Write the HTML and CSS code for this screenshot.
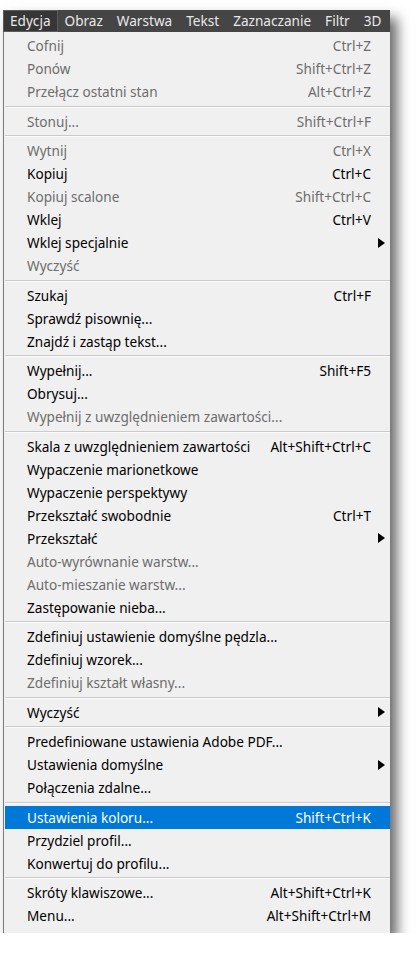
FILE: index.html
```html
<!DOCTYPE html>
<html lang="pl">
<head>
<meta charset="utf-8">
<title>Edycja</title>
<link rel="stylesheet" href="styles.css">
</head>
<body>
<div class="wrap">
  <div class="menubar">
    <span class="mb-item active">Edycja</span>
    <span class="mb-item">Obraz</span>
    <span class="mb-item">Warstwa</span>
    <span class="mb-item">Tekst</span>
    <span class="mb-item">Zaznaczanie</span>
    <span class="mb-item">Filtr</span>
    <span class="mb-item">3D</span>
  </div>
  <div class="menu">
    <div class="item off"><span class="label">Cofnij</span><span class="key">Ctrl+Z</span><span class="sub"></span></div>
    <div class="item off"><span class="label">Ponów</span><span class="key">Shift+Ctrl+Z</span><span class="sub"></span></div>
    <div class="item off"><span class="label">Przełącz ostatni stan</span><span class="key">Alt+Ctrl+Z</span><span class="sub"></span></div>
    <div class="sep"></div>
    <div class="item off"><span class="label">Stonuj...</span><span class="key">Shift+Ctrl+F</span><span class="sub"></span></div>
    <div class="sep"></div>
    <div class="item off"><span class="label">Wytnij</span><span class="key">Ctrl+X</span><span class="sub"></span></div>
    <div class="item"><span class="label">Kopiuj</span><span class="key">Ctrl+C</span><span class="sub"></span></div>
    <div class="item off"><span class="label">Kopiuj scalone</span><span class="key">Shift+Ctrl+C</span><span class="sub"></span></div>
    <div class="item"><span class="label">Wklej</span><span class="key">Ctrl+V</span><span class="sub"></span></div>
    <div class="item"><span class="label">Wklej specjalnie</span><span class="key"></span><span class="sub"><i class="arrow"></i></span></div>
    <div class="item off"><span class="label">Wyczyść</span><span class="key"></span><span class="sub"></span></div>
    <div class="sep"></div>
    <div class="item"><span class="label">Szukaj</span><span class="key">Ctrl+F</span><span class="sub"></span></div>
    <div class="item"><span class="label">Sprawdź pisownię...</span><span class="key"></span><span class="sub"></span></div>
    <div class="item"><span class="label">Znajdź i zastąp tekst...</span><span class="key"></span><span class="sub"></span></div>
    <div class="sep"></div>
    <div class="item"><span class="label">Wypełnij...</span><span class="key">Shift+F5</span><span class="sub"></span></div>
    <div class="item"><span class="label">Obrysuj...</span><span class="key"></span><span class="sub"></span></div>
    <div class="item off"><span class="label">Wypełnij z uwzględnieniem zawartości...</span><span class="key"></span><span class="sub"></span></div>
    <div class="sep"></div>
    <div class="item"><span class="label">Skala z uwzględnieniem zawartości</span><span class="key">Alt+Shift+Ctrl+C</span><span class="sub"></span></div>
    <div class="item"><span class="label">Wypaczenie marionetkowe</span><span class="key"></span><span class="sub"></span></div>
    <div class="item"><span class="label">Wypaczenie perspektywy</span><span class="key"></span><span class="sub"></span></div>
    <div class="item"><span class="label">Przekształć swobodnie</span><span class="key">Ctrl+T</span><span class="sub"></span></div>
    <div class="item"><span class="label">Przekształć</span><span class="key"></span><span class="sub"><i class="arrow"></i></span></div>
    <div class="item off"><span class="label">Auto-wyrównanie warstw...</span><span class="key"></span><span class="sub"></span></div>
    <div class="item off"><span class="label">Auto-mieszanie warstw...</span><span class="key"></span><span class="sub"></span></div>
    <div class="item"><span class="label">Zastępowanie nieba...</span><span class="key"></span><span class="sub"></span></div>
    <div class="sep"></div>
    <div class="item"><span class="label">Zdefiniuj ustawienie domyślne pędzla...</span><span class="key"></span><span class="sub"></span></div>
    <div class="item"><span class="label">Zdefiniuj wzorek...</span><span class="key"></span><span class="sub"></span></div>
    <div class="item off"><span class="label">Zdefiniuj kształt własny...</span><span class="key"></span><span class="sub"></span></div>
    <div class="sep"></div>
    <div class="item"><span class="label">Wyczyść</span><span class="key"></span><span class="sub"><i class="arrow"></i></span></div>
    <div class="sep"></div>
    <div class="item"><span class="label">Predefiniowane ustawienia Adobe PDF...</span><span class="key"></span><span class="sub"></span></div>
    <div class="item"><span class="label">Ustawienia domyślne</span><span class="key"></span><span class="sub"><i class="arrow"></i></span></div>
    <div class="item"><span class="label">Połączenia zdalne...</span><span class="key"></span><span class="sub"></span></div>
    <div class="sep"></div>
    <div class="item hl"><span class="label">Ustawienia koloru...</span><span class="key">Shift+Ctrl+K</span><span class="sub"></span></div>
    <div class="item"><span class="label">Przydziel profil...</span><span class="key"></span><span class="sub"></span></div>
    <div class="item"><span class="label">Konwertuj do profilu...</span><span class="key"></span><span class="sub"></span></div>
    <div class="sep"></div>
    <div class="item"><span class="label">Skróty klawiszowe...</span><span class="key">Alt+Shift+Ctrl+K</span><span class="sub"></span></div>
    <div class="item"><span class="label">Menu...</span><span class="key">Alt+Shift+Ctrl+M</span><span class="sub"></span></div>
    <div class="item"><span class="label">Pasek narzędzi...</span><span class="key"></span><span class="sub"></span></div>
  </div>
</div>
</body>
</html>
```
FILE: styles.css
```css
html, body {
  margin: 0;
  padding: 0;
  background: #ffffff;
}

body {
  font-family: "Noto Sans", "Open Sans", sans-serif;
  font-size: 13.6px;
}

.wrap {
  width: 387px;
  margin: 10px 0 0 3px;
  box-shadow: 7px 8px 12px rgba(0, 0, 0, 0.6);
}

.menubar {
  height: 22px;
  background: #454545;
  display: flex;
  align-items: stretch;
  color: #e8e8e8;
  white-space: nowrap;
  overflow: hidden;
}

.mb-item {
  display: flex;
  align-items: center;
  padding: 0 6px 0 6px;
  margin-right: 0;
  border: 1px solid transparent;
  line-height: 1;
}

.mb-item.active {
  background: #363636;
  border-color: #5c5c5c;
}

.menu {
  height: 899px;
  overflow: hidden;
  background: #f0f0f0;
  border-left: 1px solid #7c7c7c;
  padding-top: 2px;
}

.item {
  height: 23px;
  margin-left: 1px;
  display: flex;
  align-items: center;
  color: #000000;
  white-space: nowrap;
}

.item.off {
  color: #6d6d6d;
}

.item.hl {
  background: #0078d7;
  color: #ffffff;
}

.label {
  flex: 1;
  padding-left: 22px;
}

.key {
  text-align: right;
}

.sub {
  width: 19px;
  padding-left: 7px;
  box-sizing: border-box;
  display: flex;
  align-items: center;
}

.arrow {
  display: block;
  width: 0;
  height: 0;
  border-top: 5px solid transparent;
  border-bottom: 5px solid transparent;
  border-left: 7px solid #000000;
}

.sep {
  height: 6.5px;
  margin-left: 1px;
  box-sizing: border-box;
  padding-top: 2.5px;
}

.sep::before {
  content: "";
  display: block;
  height: 1px;
  background: #cacaca;
  border-bottom: 1px solid #fbfbfb;
}
```
